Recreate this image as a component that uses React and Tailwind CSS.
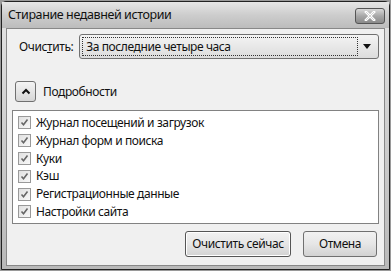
import React from "react";

const items = [
  "Журнал посещений и загрузок",
  "Журнал форм и поиска",
  "Куки",
  "Кэш",
  "Регистрационные данные",
  "Настройки сайта",
];

const Check = () => (
  <span className="w-[13px] h-[13px] border border-[#999] bg-gradient-to-br from-[#e0e0e0] to-[#f8f8f8] flex items-center justify-center shrink-0">
    <svg width="9" height="9" viewBox="0 0 9 9">
      <path d="M1.5 4.5 L3.5 6.8 L7.5 1.5" fill="none" stroke="#666" strokeWidth="1.6" />
    </svg>
  </span>
);

const ClearHistoryDialog = () => {
  return (
    <div
      className="w-[391px] h-[271px] bg-[#9a9a9a] p-[1px] tracking-[-0.4px]"
      style={{ fontFamily: '"Noto Sans", "Open Sans", sans-serif' }}
    >
      <div className="w-full h-full border border-[#222] bg-gradient-to-b from-[#e4e4e4] to-[#b9b9b9] flex flex-col rounded-t-[5px]">
        {/* title bar */}
        <div className="h-[26px] flex items-center justify-between pl-[6px] pr-[4px] bg-gradient-to-b from-[#e6e6e6] via-[#cdcdcd] to-[#bcbcbc]">
          <span className="text-[12.5px] text-[#111] leading-none">Стирание недавней истории</span>
          <div className="w-[30px] h-[16px] mt-[1px] border border-[#555] rounded-[3px] bg-gradient-to-b from-[#d9d9d9] via-[#a8a8a8] to-[#8a8a8a] flex items-center justify-center">
            <svg width="12" height="10" viewBox="0 0 12 10">
              <path d="M2 1 L10 9 M10 1 L2 9" stroke="#fff" strokeWidth="2.6" strokeLinecap="square" />
              <path d="M2 1 L10 9 M10 1 L2 9" stroke="#444" strokeWidth="0.6" fill="none" opacity="0.4" />
            </svg>
          </div>
        </div>
        {/* body */}
        <div className="flex-1 mx-[4px] mb-[3px] border border-[#888] bg-[#f0f0f0] flex flex-col px-[5px] pt-[5px] text-[12px] text-[#111]">
          <div className="flex items-center gap-[6px] pl-[7px]">
            <span>
              Очис<span className="underline">т</span>ить:
            </span>
            <div className="flex-1 h-[25px] border border-[#707070] rounded-[3px] bg-gradient-to-b from-[#f4f4f4] to-[#dcdcdc] flex items-center p-[2px]">
              <div className="flex-1 h-full border border-dotted border-[#333] flex items-center pl-[3px]">
                За последние четыре часа
              </div>
              <div className="w-[18px] flex items-center justify-center">
                <svg width="8" height="5" viewBox="0 0 8 5">
                  <path d="M0 0 L8 0 L4 5 Z" fill="#111" />
                </svg>
              </div>
            </div>
          </div>

          <div className="flex items-center gap-[7px] mt-[22px] pl-[3px]">
            <div className="w-[21px] h-[21px] border border-[#707070] rounded-[3px] bg-gradient-to-b from-[#f4f4f4] to-[#d6d6d6] flex items-center justify-center">
              <svg width="10" height="7" viewBox="0 0 10 7">
                <path d="M1.5 5.5 L5 2 L8.5 5.5" fill="none" stroke="#111" strokeWidth="2" />
              </svg>
            </div>
            <span>Подробности</span>
          </div>

          <div className="mt-[8px] border border-[#828282] bg-white pt-[3px] pb-[2px] pl-[5px] flex flex-col">
            {items.map((t) => (
              <div key={t} className="h-[17.8px] flex items-center gap-[5px]">
                <Check />
                <span>{t}</span>
              </div>
            ))}
          </div>

          <div className="flex justify-end gap-[12px] mt-[7px] pr-[2px]">
            <button className="w-[106px] h-[26px] border border-[#555] rounded-[3px] bg-gradient-to-b from-[#f2f2f2] via-[#e6e6e6] to-[#d2d2d2] shadow-[inset_0_0_0_1px_#fff] text-[12px]">
              Очистить сейчас
            </button>
            <button className="w-[74px] h-[26px] border border-[#707070] rounded-[3px] bg-gradient-to-b from-[#f2f2f2] via-[#e6e6e6] to-[#d2d2d2] text-[12px]">
              Отмена
            </button>
          </div>
        </div>
      </div>
    </div>
  );
};

export default function App() {
  return <ClearHistoryDialog />;
}
